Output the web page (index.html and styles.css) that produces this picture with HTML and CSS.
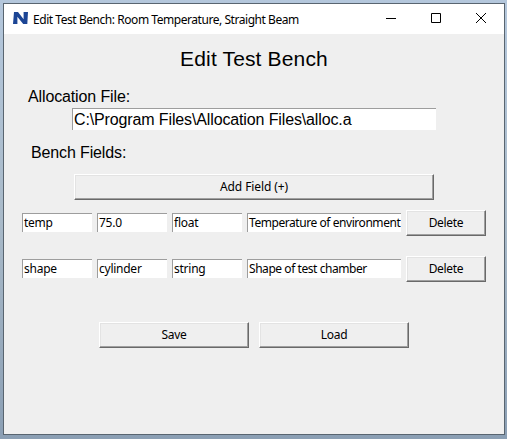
FILE: index.html
```html
<!DOCTYPE html>
<html lang="en">
<head>
<meta charset="utf-8">
<title>Edit Test Bench</title>
<link rel="stylesheet" href="styles.css">
</head>
<body>
<div class="window">
  <header class="titlebar">
    <svg class="logo" width="15" height="12" viewBox="0 0 15 12"><path fill="#1c4595" d="M1 0H5L10.6 7.2V0H15L14.3 12H10.2L4.4 4.8V12H0Z"/></svg>
    <span class="caption">Edit Test Bench: Room Temperature, Straight Beam</span>
    <div class="controls">
      <svg width="10" height="10" viewBox="0 0 10 10"><path d="M0 5.5H10"/></svg>
      <svg width="10" height="10" viewBox="0 0 10 10"><path d="M.5 .5H9.5V9.5H.5Z"/></svg>
      <svg width="10" height="10" viewBox="0 0 10 10"><path d="M0 0L10 10M10 0L0 10"/></svg>
    </div>
  </header>
  <main class="client">
    <h1>Edit Test Bench</h1>
    <div class="label allocation">Allocation File:</div>
    <div class="entry path">C:\Program Files\Allocation Files\alloc.a</div>
    <div class="label bench">Bench Fields:</div>
    <button class="add">Add Field (+)</button>
    <div class="row">
      <div class="entry">temp</div><div class="entry">75.0</div><div class="entry">float</div>
      <div class="entry description">Temperature of environment</div><button>Delete</button>
    </div>
    <div class="row">
      <div class="entry">shape</div><div class="entry">cylinder</div><div class="entry">string</div>
      <div class="entry description">Shape of test chamber</div><button>Delete</button>
    </div>
    <div class="actions"><button>Save</button><button>Load</button></div>
  </main>
</div>
</body>
</html>
```
FILE: styles.css
```css
* { box-sizing: border-box; }
body {
  margin: 0;
  padding: 3px 2px 4px 3px;
  height: 439px;
  overflow: hidden;
  background: linear-gradient(#b4c7dc, #a9bac9 50%, #8b9fb4);
  font: 12px/17px "Noto Sans", sans-serif;
  color: #000;
}
.window {
  width: 502px;
  height: 432px;
  border: 1px solid #596570;
  background: #efefef;
}
.titlebar {
  display: flex;
  align-items: center;
  height: 30px;
  padding: 0 18px 0 9px;
  background: #fff;
}
.logo { margin: 0 5px 2px 0; }
.caption { white-space: nowrap; letter-spacing: -0.45px; }
.controls { display: flex; gap: 35px; margin: 0 0 2px auto; }
.controls svg { fill: none; stroke: #000; stroke-width: 1; }
.client { display: flex; flex-direction: column; }
h1 {
  margin: 12px 0 0;
  font: 21px/26px "Liberation Sans", sans-serif;
  letter-spacing: 0.15px;
  text-align: center;
}
.label { font: 16px/20px "Liberation Sans", sans-serif; letter-spacing: -0.13px; }
.allocation { margin: 15px 0 0 24px; height: 20px; }
.bench { margin: 13px 0 0 27px; }
.entry {
  height: 19px;
  padding: 0 0 0 1px;
  background: #fff;
  border: solid #9d9d9d;
  border-width: 1px 0 0 1px;
  white-space: nowrap;
  overflow: hidden;
  letter-spacing: -0.25px;
}
.entry.description { letter-spacing: -0.44px; }
.entry.path {
  width: 364px;
  height: 22px;
  margin: 1px 0 0 68px;
  font: 16px/21px "Liberation Sans", sans-serif;
  letter-spacing: -0.13px;
}
button {
  height: 26px;
  padding: 0 0 1px;
  background: #efefef;
  border: 1px solid;
  border-color: #fff #696969 #696969 #fff;
  box-shadow: inset -1px -1px #a0a0a0, inset 1px 1px #e3e3e3;
  font: inherit;
  color: inherit;
  letter-spacing: -0.3px;
}
.add { width: 360px; margin: 11px 0 10px 70px; letter-spacing: -0.1px; }
.row {
  display: grid;
  grid-template-columns: 70px 70px 70px 154px 80px;
  column-gap: 5px;
  align-items: start;
  height: 26px;
  margin: 0 0 20px 18px;
}
.row .entry { margin-top: 3px; }
.actions { display: flex; gap: 10px; margin: 20px 0 0 95px; }
.actions button { width: 150px; }
```
